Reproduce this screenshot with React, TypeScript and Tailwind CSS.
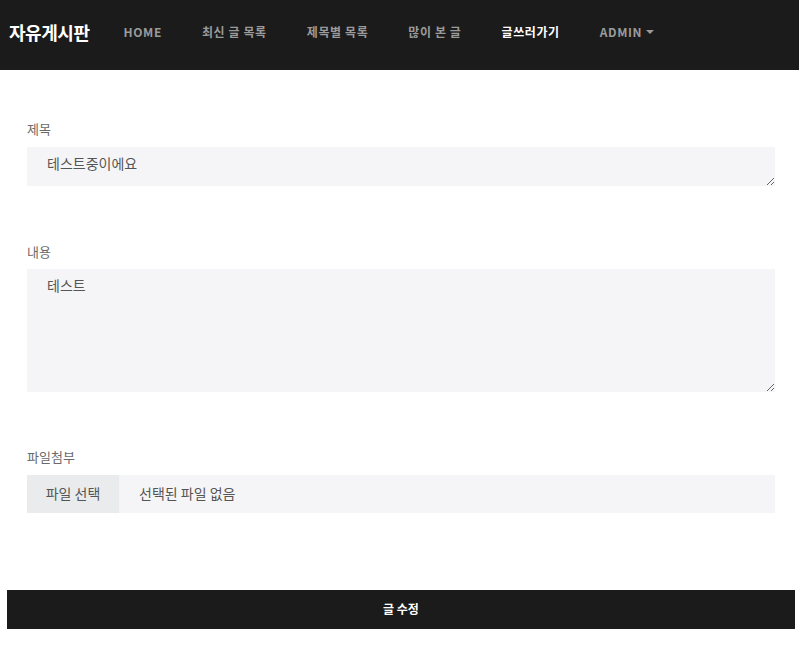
const nav = ['HOME', '최신 글 목록', '제목별 목록', '많이 본 글', '글쓰러가기'];

export default function App() {
  return (
    <div className="min-h-screen bg-white" style={{ fontFamily: '"Noto Sans CJK KR", "Noto Sans", sans-serif' }}>
      <header className="h-[70px] bg-[#1b1b1b] flex items-center pl-[9px] pb-[6px]">
        <span className="text-white font-bold text-[18px] leading-none tracking-tight mr-[14px]">자유게시판</span>
        <nav className="flex items-center">
          {nav.map((n) => (
            <a
              key={n}
              className={`px-5 text-[12px] font-semibold tracking-[0.05em] ${n === '글쓰러가기' ? 'text-white' : 'text-[#9a9a9a]'}`}
            >
              {n}
            </a>
          ))}
          <a className="px-5 text-[12px] font-semibold tracking-[0.05em] text-[#9a9a9a] flex items-center gap-1">
            ADMIN
            <span className="inline-block w-0 h-0 border-x-[4px] border-x-transparent border-t-[4px] border-t-[#9a9a9a]" />
          </a>
        </nav>
      </header>

      <form className="pl-[27px] pr-[24px] pt-[49px]">
        <div>
          <label className="block text-[13px] text-[#6a6a6a] mb-[8px]">제목</label>
          <textarea
            defaultValue="테스트중이에요"
            className="block w-full h-[39px] bg-[#f5f5f7] px-5 py-[6px] text-[14px] text-[#555] outline-none"
          />
        </div>
        <div className="mt-[56px]">
          <label className="block text-[13px] text-[#6a6a6a] mb-[8px]">내용</label>
          <textarea
            defaultValue="테스트"
            className="block w-full h-[123px] bg-[#f5f5f7] px-5 py-[6px] text-[14px] text-[#555] outline-none"
          />
        </div>
        <div className="mt-[55px]">
          <label className="block text-[13px] text-[#6a6a6a] mb-[8px]">파일첨부</label>
          <div className="flex h-[38px] bg-[#f5f5f7] text-[14px] text-[#555]">
            <span className="w-[92px] bg-[#eaebec] flex items-center justify-center">파일 선택</span>
            <span className="flex items-center pl-5">선택된 파일 없음</span>
          </div>
        </div>
      </form>

      <div className="pl-[7px] pr-[4px] mt-[77px]">
        <button className="w-full h-[39px] bg-[#1b1b1b] text-white text-[12px] font-bold">글 수정</button>
      </div>
    </div>
  );
}
